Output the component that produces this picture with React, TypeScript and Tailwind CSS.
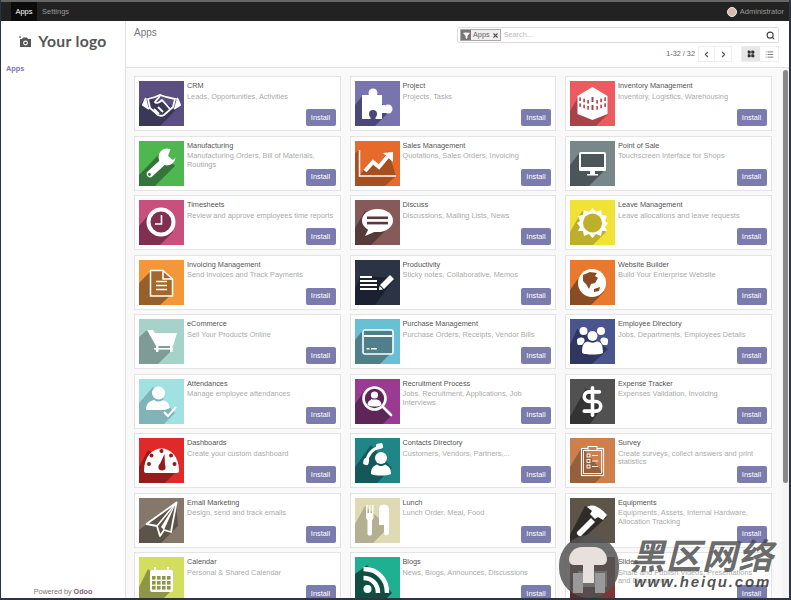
import type { ReactNode } from "react"
import { ChevronLeft, ChevronRight, DollarSign, LayoutGrid, List, Search, Filter, X } from "lucide-react"

type App = {
  name: string
  desc: string
  bg: string
  sh: string
  shadow?: string
  glyph: (sh: string, bg: string) => ReactNode
}

const W = "#ffffff"
const defaultShadow = "0,22 9,13 38,29 22,45 0,45"

const apps: App[] = [
  {
    name: "CRM", desc: "Leads, Opportunities, Activities", bg: "#5a4f80", sh: "#3a3955",
    shadow: "0,25 7,16 39,27 21,45 0,45",
    glyph: () => (
      <g>
        <path d="M7 17 L4 24 L10 28 M38 17 L41 24 L35 28" fill={W} stroke={W} strokeWidth="2" />
        <path d="M9 18 L16 16 L21 14 L27 16 L36 18 L34 26 L25 34 C23 35 21 35 19 34 L11 27 Z" fill="none" stroke={W} strokeWidth="1.8" />
        <path d="M21 15 L16 21 C18 23 20 22 23 19 L31 28 M15 28 L20 33 M19 26 L24 31" fill="none" stroke={W} strokeWidth="1.8" />
      </g>
    ),
  },
  {
    name: "Project", desc: "Projects, Tasks", bg: "#7875ae", sh: "#4a4878",
    shadow: "0,24 8,14 37,28 20,45 0,45",
    glyph: (sh) => (
      <g fill={W}>
        <rect x="7" y="14" width="20" height="24" />
        <circle cx="18" cy="12" r="4.5" />
        <circle cx="33" cy="28" r="4.5" />
        <rect x="26" y="24" width="4" height="8" />
        <circle cx="18" cy="33" r="4" fill={sh} />
        <rect x="15.5" y="35" width="5" height="3" fill={sh} />
      </g>
    ),
  },
  {
    name: "Inventory Management", desc: "Inventory, Logistics, Warehousing", bg: "#ed5a5f", sh: "#a94347",
    shadow: "0,30 8,16 38,33 26,45 0,45",
    glyph: (sh) => (
      <g>
        <polygon points="22.5,6 7.5,15 7.5,33 22.5,39 37.5,33 37.5,15" fill={W} />
        <g fill="#c0393f">
          {[10, 14, 18, 27, 31, 35].map((x) =>
            [19, 25].map((y) => <rect key={`${x}-${y}`} x={x - 0.7} y={x < 22 ? y - (18 - x) / 3 : y - (x - 27) / 3} width="1.6" height="3.6" />),
          )}
          <rect x="21.5" y="16" width="2" height="5" fill={sh} />
          <rect x="21.5" y="24" width="2" height="5" fill={sh} />
        </g>
      </g>
    ),
  },
  {
    name: "Manufacturing", desc: "Manufacturing Orders, Bill of Materials, Routings", bg: "#4eb750", sh: "#34763a",
    shadow: "0,34 22,11 36,25 16,45 0,45",
    glyph: (_sh, bg) => (
      <g>
        <line x1="11" y1="33" x2="25" y2="20" stroke={W} strokeWidth="6.5" strokeLinecap="round" />
        <circle cx="28" cy="16" r="8.5" fill={W} />
        <polygon points="29,15 33,4 42,11 34,19" fill={bg} />
        <circle cx="10.5" cy="33.5" r="1.4" fill="#34763a" />
      </g>
    ),
  },
  {
    name: "Sales Management", desc: "Quotations, Sales Orders, Invoicing", bg: "#e56a2c", sh: "#a84f1f",
    shadow: "4,9 5,35 30,45 0,45 0,12",
    glyph: () => (
      <g>
        <polygon points="4,35 9,29 17,19 24,24 33,10 41,35 30,45 0,45 0,35" fill="#a84f1f" />
        <path d="M4.5 9 V35 H41" fill="none" stroke={W} strokeWidth="1.5" />
        <path d="M10 30 L18 21 L24 26 L33 15" fill="none" stroke={W} strokeWidth="4" />
        <polygon points="28,12 38,11 38,21" fill={W} />
      </g>
    ),
  },
  {
    name: "Point of Sale", desc: "Touchscreen Interface for Shops", bg: "#78888a", sh: "#4c5658",
    shadow: "0,24 10,11 36,28 19,45 0,45",
    glyph: (sh) => (
      <g>
        <rect x="9" y="11" width="27" height="19" rx="1.5" fill={W} />
        <rect x="11" y="13" width="23" height="13" fill={sh} />
        <rect x="20" y="30" width="5" height="3" fill={W} />
        <rect x="17" y="33" width="11" height="1.5" fill={W} />
      </g>
    ),
  },
  {
    name: "Timesheets", desc: "Review and approve employees time reports", bg: "#c94f7c", sh: "#7f2f50",
    shadow: "0,26 12,12 34,32 21,45 0,45",
    glyph: (sh) => (
      <g>
        <circle cx="22" cy="22" r="12.5" fill={sh} stroke={W} strokeWidth="4" />
        <path d="M22.5 15 V24 H16" fill="none" stroke={W} strokeWidth="1.6" />
      </g>
    ),
  },
  {
    name: "Discuss", desc: "Discussions, Mailing Lists, News", bg: "#875a5a", sh: "#573b3b",
    shadow: "0,28 10,11 37,24 16,45 0,45",
    glyph: (sh) => (
      <g>
        <ellipse cx="22.5" cy="20.5" rx="15.5" ry="11.5" fill={W} />
        <polygon points="14,28 10,36 24,30" fill={W} />
        <rect x="12" y="16.5" width="21" height="2.6" fill={sh} />
        <rect x="12" y="21.8" width="21" height="2.6" fill={sh} />
      </g>
    ),
  },
  {
    name: "Leave Management", desc: "Leave allocations and leave requests", bg: "#f1e336", sh: "#bdaf2a",
    shadow: "0,32 12,11 36,32 23,45 0,45",
    glyph: (sh) => (
      <g>
        <polygon points="22.5,8 26,12 31,10 32,15 37,16 35,21 38,23 35,27 37,31 32,31 31,36 26,34 22.5,38 19,34 14,36 13,31 8,31 10,27 7,23 10,21 8,16 13,15 14,10 19,12" fill={W} />
        <circle cx="22.5" cy="23" r="9.5" fill="#bdb12c" />
      </g>
    ),
  },
  {
    name: "Invoicing Management", desc: "Send Invoices and Track Payments", bg: "#f39738", sh: "#96602a",
    shadow: "0,23 11,12 33,34 21,45 0,45",
    glyph: () => (
      <g>
        <polygon points="11.5,10.5 24,10.5 33.5,19 33.5,36 11.5,36" fill="#a5682c" stroke={W} strokeWidth="1.5" />
        <path d="M24 10.5 V19 H33.5" fill="none" stroke={W} strokeWidth="1.5" />
        <path d="M17 21.5 H28 M17 25.5 H28 M17 29.5 H28" stroke={W} strokeWidth="1.6" />
      </g>
    ),
  },
  {
    name: "Productivity", desc: "Sticky notes, Collaborative, Memos", bg: "#2b3345", sh: "#1b2130",
    shadow: "0,30 5,16 40,18 20,45 0,45",
    glyph: () => (
      <g fill={W}>
        <rect x="5" y="16" width="12" height="2" />
        <rect x="5" y="20" width="17" height="2" />
        <rect x="5" y="24" width="17" height="2" />
        <rect x="5" y="28" width="17" height="2" />
        <polygon points="35,15 39,19 29,29 25,25" />
        <polygon points="24.5,26 28,29.5 24,30" />
      </g>
    ),
  },
  {
    name: "Website Builder", desc: "Build Your Enterprise Website", bg: "#e8792f", sh: "#8a4c22",
    shadow: "0,30 12,13 34,32 21,45 0,45",
    glyph: (sh) => (
      <g>
        <circle cx="22" cy="23" r="14" fill={W} />
        <path d="M13 15 L20 12 L27 13 L25 16 L28 18 L25 23 L21 24 L19 29 L16 24 L13 21 Z" fill={sh} />
        <path d="M24 29 L30 27 L29 31 L24 32 Z" fill={sh} />
      </g>
    ),
  },
  {
    name: "eCommerce", desc: "Sell Your Products Online", bg: "#a7d2c9", sh: "#7f9b96",
    shadow: "0,18 8,11 34,30 19,45 0,45",
    glyph: () => (
      <g fill={W}>
        <path d="M8 11 H14 L16 14 H38 L34 27 H17 Z" />
        <rect x="15" y="29" width="19" height="1.6" />
        <rect x="17" y="27" width="2.5" height="6" />
        <rect x="31" y="27" width="2.5" height="6" />
      </g>
    ),
  },
  {
    name: "Purchase Management", desc: "Purchase Orders, Receipts, Vendor Bills", bg: "#68c0d5", sh: "#4e7f8b",
    shadow: "0,21 8,11 37,33 25,45 0,45",
    glyph: (sh) => (
      <g>
        <rect x="8" y="11" width="30" height="24" rx="2" fill={sh} stroke={W} strokeWidth="1.6" />
        <rect x="9" y="12" width="28" height="3" fill={sh} />
        <rect x="9" y="16" width="28" height="2" fill={W} />
        <rect x="11.5" y="29" width="3" height="1.5" fill={W} />
        <rect x="16" y="29" width="6" height="1.5" fill={W} />
      </g>
    ),
  },
  {
    name: "Employee Directory", desc: "Jobs, Departments, Employees Details", bg: "#4a5590", sh: "#2f365f",
    shadow: "0,26 7,10 38,30 22,45 0,45",
    glyph: () => (
      <g fill={W}>
        <circle cx="13.5" cy="12" r="4" />
        <circle cx="31" cy="12" r="4" />
        <circle cx="22.5" cy="17" r="5" />
        <path d="M7 21 C7 17 20 17 12 26 H8 C7 25 7 23 7 21 Z" />
        <path d="M38 21 C38 17 25 17 33 26 H37 C38 25 38 23 38 21 Z" />
        <path d="M12 34 C12 24 15 23 18 22.5 C21 24 24 24 27 22.5 C30 23 33 24 33 34 C30 36 15 36 12 34 Z" />
      </g>
    ),
  },
  {
    name: "Attendances", desc: "Manage employee attendances", bg: "#a2e1e2", sh: "#7fb5b8",
    shadow: "0,24 14,8 36,34 25,45 0,45",
    glyph: () => (
      <g fill={W}>
        <circle cx="19.5" cy="14" r="6.5" />
        <path d="M7 31 C7 24 11 22 15 21 C18 23 21 23 24 21 C27 22 30 24 31 29 L26 31 Z" />
        <path d="M25 33 L29 37 L37 28" fill="none" stroke={W} strokeWidth="2" />
      </g>
    ),
  },
  {
    name: "Recruitment Process", desc: "Jobs, Recruitment, Applications, Job Interviews", bg: "#9b3a92", sh: "#5d2558",
    shadow: "0,25 10,11 37,36 28,45 0,45",
    glyph: (sh) => (
      <g>
        <circle cx="19.5" cy="19.5" r="11" fill={sh} stroke={W} strokeWidth="2.6" />
        <line x1="28" y1="28" x2="36" y2="36" stroke={W} strokeWidth="2.6" strokeLinecap="round" />
        <circle cx="19.5" cy="16" r="3.6" fill={W} />
        <path d="M12.5 26 C13 21 16 21 17 20.5 H22 C23 21 26 21 26.5 26 C23 28 16 28 12.5 26 Z" fill={W} />
      </g>
    ),
  },
  {
    name: "Expense Tracker", desc: "Expenses Validation, Invoicing", bg: "#515151", sh: "#333333",
    shadow: "0,38 16,9 31,30 20,45 0,45",
    glyph: () => <DollarSign x={6} y={6} width={33} height={33} stroke={W} strokeWidth={2.6} />,
  },
  {
    name: "Dashboards", desc: "Create your custom dashboard", bg: "#e02a2a", sh: "#961c1c",
    shadow: "0,29 9,12 40,31 26,45 0,45",
    glyph: (sh) => (
      <g>
        <path d="M5 33 C5 3 40 3 40 33 C40 34 39 35 38 35 H7 C6 35 5 34 5 33 Z" fill={W} />
        <g fill={sh}>
          <circle cx="22.5" cy="13" r="2" />
          <circle cx="12.5" cy="17.5" r="2" />
          <circle cx="32" cy="17.5" r="2" />
          <circle cx="10" cy="26" r="2" />
          <circle cx="35.5" cy="26" r="2" />
          <polygon points="25.5,16 26,28 20,28" />
          <circle cx="23" cy="29" r="3.6" />
        </g>
      </g>
    ),
  },
  {
    name: "Contacts Directory", desc: "Customers, Vendors, Partners,...", bg: "#1f8587", sh: "#14585a",
    shadow: "0,29 16,7 37,30 22,45 0,45",
    glyph: () => (
      <g fill={W}>
        <path d="M25 9 C17 11 12.5 17 11.5 24" fill="none" stroke={W} strokeWidth="3" />
        <rect x="21" y="5.5" width="7" height="5.5" rx="2" transform="rotate(-12 24 8)" />
        <rect x="8.5" y="20" width="5.5" height="7" rx="2" transform="rotate(12 11 23)" />
        <circle cx="26" cy="20" r="6" />
        <path d="M16 36 C16 29 19 28 22 26.5 C25 28.5 27 28.5 30 26.5 C33 28 36 29 36 36 C32 38 20 38 16 36 Z" />
      </g>
    ),
  },
  {
    name: "Survey", desc: "Create surveys, collect answers and print statistics", bg: "#cd804c", sh: "#96603c",
    shadow: "0,29 12,9 34,36 25,45 0,45",
    glyph: () => (
      <g fill="none" stroke={W}>
        <rect x="11.5" y="10.5" width="22" height="27" strokeWidth="1.2" />
        <rect x="13.5" y="12.5" width="18" height="23" strokeWidth="0.9" />
        <rect x="18" y="8.5" width="9" height="4" fill="#cd804c" strokeWidth="1" />
        <rect x="17" y="16" width="3" height="3" strokeWidth="0.9" />
        <rect x="17" y="21.5" width="3" height="3" strokeWidth="0.9" />
        <rect x="17" y="27" width="3" height="3" strokeWidth="0.9" />
        <path d="M22 17.5 H28 M22 23 H28 M22 28.5 H28" strokeWidth="0.9" />
      </g>
    ),
  },
  {
    name: "Email Marketing", desc: "Design, send and track emails", bg: "#85786a", sh: "#5c5349",
    shadow: "0,32 37,4 39,28 22,45 0,45",
    glyph: (sh) => (
      <g>
        <polygon points="37.5,4.5 7.5,26 18,28 21,38 25,32 32,34" fill={sh} stroke={W} strokeWidth="1.8" strokeLinejoin="round" />
        <path d="M37 5 L18 28" stroke={W} strokeWidth="1.6" />
        <path d="M37 5 L22 29 L25 32" fill={W} />
      </g>
    ),
  },
  {
    name: "Lunch", desc: "Lunch Order, Meal, Food", bg: "#dfdab4", sh: "#b3af90",
    shadow: "0,26 10,8 34,29 18,45 0,45",
    glyph: () => (
      <g fill={W}>
        <path d="M11 7 H12.5 V15 H14 V7 H15.5 V15 H17 V7 H18.5 V19 C18.5 21 17.5 22 17 22 V36 C17 38 12.5 38 12.5 36 V22 C12 22 11 21 11 19 Z" />
        <path d="M27 7 C32 6 34 8 34 12 V35 C34 38 29 38 29 35 V27 H24 V12 C24 9 25 7 27 7 Z" />
      </g>
    ),
  },
  {
    name: "Equipments", desc: "Equipments, Assets, Internal Hardware, Allocation Tracking", bg: "#5c5548", sh: "#2f2b26",
    shadow: "0,37 15,8 37,19 8,45 0,45",
    glyph: () => (
      <g fill={W}>
        <path d="M17 9 C23 5 30 9 37 17 L33 22 L28 19 L25 21 L20 16 L22 13 C20 11 18 10 17 9 Z" />
        <path d="M21 20 L25 24 L11 38 C9 39 6 36 7 34 Z" />
      </g>
    ),
  },
  {
    name: "Calendar", desc: "Personal & Shared Calendar", bg: "#d3de5f", sh: "#8f9645",
    shadow: "0,30 9,12 34,32 21,45 0,45",
    glyph: (sh) => (
      <g>
        <rect x="11" y="13" width="23" height="22" rx="2" fill={W} />
        <rect x="15" y="10" width="2" height="5" fill={W} />
        <rect x="28" y="10" width="2" height="5" fill={W} />
        <g fill={sh}>
          {[19, 24, 29].map((y) => [13, 18, 23, 28].map((x) => <rect key={`${x}-${y}`} x={x} y={y} width="3.6" height="3.6" />))}
        </g>
      </g>
    ),
  },
  {
    name: "Blogs", desc: "News, Blogs, Announces, Discussions", bg: "#1fb091", sh: "#0f4f42",
    shadow: "0,17 12,8 37,36 28,45 0,45",
    glyph: () => (
      <g fill="none" stroke={W}>
        <circle cx="12.5" cy="32" r="4" fill={W} stroke="none" />
        <path d="M8.5 21 C17 21 23 27 23 36" strokeWidth="4.5" />
        <path d="M8.5 12 C23 12 32 22 32 36" strokeWidth="4.5" />
      </g>
    ),
  },
  {
    name: "Slides", desc: "Share and Publish Videos, Presentations and Documents", bg: "#7f3535", sh: "#5c2a2a",
    glyph: () => <polygon points="8,14 37,14 37,30 8,30" fill={W} />,
  },
]

function Tile({ app }: { app: App }) {
  return (
    <svg viewBox="0 0 45 45" className="w-[45px] h-[45px] shrink-0 block">
      <rect width="45" height="45" fill={app.bg} />
      <polygon points={app.shadow ?? defaultShadow} fill={app.sh} />
      {app.glyph(app.sh, app.bg)}
    </svg>
  )
}

function Card({ app }: { app: App }) {
  return (
    <div className="relative h-[55px] bg-white border border-[#e4e4e4] p-1 flex gap-[3px]">
      <Tile app={app} />
      <div className="min-w-0 flex-1">
        <div className="text-[7.3px] leading-[9px] text-[#555555]">{app.name}</div>
        <div className="text-[7.4px] leading-[8.6px] mt-[2.5px] text-[#aaaaaa]">{app.desc}</div>
      </div>
      <button className="absolute right-1 bottom-1 w-[30px] h-[17px] rounded-[2px] bg-[#7c7bad] text-white text-[7.4px] leading-none">
        Install
      </button>
    </div>
  )
}

function Logo() {
  return (
    <div className="h-[38px] flex items-center justify-center gap-[6px]">
      <svg viewBox="0 0 13 12" className="w-[13px] h-[12px]">
        <path d="M1 3 H3 L4 1.5 H8 L9 3 H12 V11 H1 Z" fill="#555555" />
        <circle cx="6.5" cy="7" r="2.4" fill="#ffffff" />
        <circle cx="6.5" cy="7" r="1.3" fill="#555555" />
        <path d="M0 1 H2 M1 0 V2" stroke="#555555" strokeWidth="0.7" />
      </svg>
      <span className="font-['Lato',sans-serif] font-bold text-[15.7px] leading-none tracking-[0.3px] text-[#555555]">Your logo</span>
    </div>
  )
}

function Sidebar() {
  return (
    <aside className="w-[125px] shrink-0 bg-white border-r border-[#e2e2e2] flex flex-col">
      <div className="pt-[2px]">
        <Logo />
      </div>
      <a className="px-[5px] mt-[3px] text-[7.4px] leading-[10px] font-bold text-[#7c7bad]">Apps</a>
      <div className="mt-auto pb-[1px] text-center text-[7.2px] leading-[10px] text-[#777777]">
        Powered by <span className="font-bold text-[#875a7b]">Odoo</span>
      </div>
    </aside>
  )
}

function ControlPanel() {
  return (
    <div className="h-[47px] shrink-0 bg-white border-b border-[#e2e2e2] pl-[8px] pr-[10px] pt-[6px] flex justify-between">
      <h2 className="text-[10px] leading-[12px] text-[#777777]">Apps</h2>
      <div className="w-[322px] flex flex-col">
        <div className="h-[16px] border border-[#dddddd] rounded-[2px] flex items-center pl-[2px] pr-[3px]">
          <span className="h-[12px] flex items-center bg-[#f0eeee] border border-[#aaaaaa]">
            <span className="w-[10px] h-[10px] bg-[#777777] flex items-center justify-center">
              <Filter size={7} fill="#ffffff" stroke="#ffffff" />
            </span>
            <span className="px-[2px] text-[7.3px] text-[#666666]">Apps</span>
            <X size={7} strokeWidth={4} className="text-[#555555] mr-[1px]" />
          </span>
          <span className="ml-[3px] text-[7.3px] text-[#bbbbbb]">Search...</span>
          <Search size={9} strokeWidth={3} className="ml-auto text-[#444444]" />
        </div>
        <div className="mt-[3px] flex items-center justify-end">
          <span className="text-[7.3px] text-[#666666] mr-[3px]">1-32 / 32</span>
          <div className="flex border border-[#eeeeee] h-[16px]">
            <span className="w-[16px] flex items-center justify-center border-r border-[#eeeeee]"><ChevronLeft size={9} strokeWidth={3} className="text-[#555555]" /></span>
            <span className="w-[16px] flex items-center justify-center"><ChevronRight size={9} strokeWidth={3} className="text-[#555555]" /></span>
          </div>
          <div className="ml-[9px] flex border border-[#eeeeee] h-[16px]">
            <span className="w-[18px] bg-[#e6e6e6] flex items-center justify-center"><LayoutGrid size={8} fill="#333333" className="text-[#333333]" /></span>
            <span className="w-[18px] flex items-center justify-center"><List size={9} className="text-[#555555]" /></span>
          </div>
        </div>
      </div>
    </div>
  )
}

function Watermark() {
  return (
    <div className="absolute left-[559px] top-[535px] w-[232px] h-[65px] flex">
      <div className="relative w-[60px] h-[63px] rounded-full bg-[#555555]/85 shrink-0">
        <div className="absolute left-[10px] top-[12px] w-[38px] h-[18px] rounded-t-[20px] rounded-b-[8px] bg-[#e8e0dc]" />
        <div className="absolute left-[24px] top-[30px] w-[11px] h-[18px] bg-[#e8e0dc]" />
        <div className="absolute left-[14px] top-[38px] w-[10px] h-[20px] bg-[#999999]" />
        <div className="absolute left-[36px] top-[38px] w-[10px] h-[20px] bg-[#999999]" />
      </div>
      <div className="ml-[11px] flex flex-col">
        <div className="font-['Noto_Sans_CJK_SC',sans-serif] font-bold italic text-[35px] leading-[38px] tracking-[1px] text-[#444444]/80 whitespace-nowrap">黑区网络</div>
        <div className="ml-[4px] font-['Liberation_Sans',sans-serif] font-bold italic text-[15px] leading-[17px] tracking-[1.8px] text-[#333333]/85 whitespace-nowrap">www.heiqu.com</div>
      </div>
    </div>
  )
}

export default function App() {
  return (
    <div className="relative w-[791px] h-[600px] overflow-hidden bg-[#2a3540] pl-[1px] pr-[2px] pb-[2px] flex flex-col font-['Liberation_Sans',Arial,sans-serif]">
      <div className="h-[2px] shrink-0 bg-[#666666]" />
      <nav className="h-[19px] shrink-0 bg-[#222222] flex items-stretch text-[7.5px] pl-[10px] pr-[5px]">
        <a className="w-[26px] bg-[#0b0b0b] text-white flex items-center justify-center">Apps</a>
        <a className="ml-[5px] text-[#999999] flex items-center">Settings</a>
        <div className="ml-auto flex items-center gap-[3px] text-[#999999]">
          <span className="w-[10px] h-[10px] rounded-full bg-[#d9b8a8] border border-[#eeeeee]" />
          Administrator
        </div>
      </nav>
      <div className="flex-1 min-h-0 flex">
        <Sidebar />
        <div className="flex-1 min-w-0 flex flex-col bg-[#f9f9f9]">
          <ControlPanel />
          <div className="flex-1 min-h-0 flex overflow-hidden">
            <main className="flex-1 min-w-0 pl-[8px] pt-[8px]">
              <div className="grid grid-cols-[repeat(3,206.5px)] auto-rows-[55px] gap-x-[9px] gap-y-[4.5px]">
                {apps.map((app) => (
                  <Card key={app.name} app={app} />
                ))}
              </div>
            </main>
            <div className="w-[7px] shrink-0 bg-[#f4f4f4] pt-[2px] flex justify-center">
              <div className="w-[5px] h-[413px] rounded-[3px] bg-[#888888]" />
            </div>
          </div>
        </div>
      </div>
      <Watermark />
    </div>
  )
}
